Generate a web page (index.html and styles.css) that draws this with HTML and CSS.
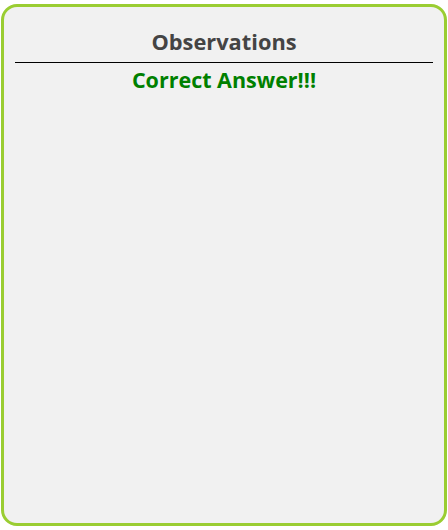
FILE: index.html
```html
<!DOCTYPE html>
<html>
<head>
<meta charset="utf-8">
<link rel="stylesheet" href="styles.css">
</head>
<body>
<div class="panel">
  <h2 class="title">Observations</h2>
  <div class="result">Correct Answer!!!</div>
</div>
</body>
</html>
```
FILE: styles.css
```css
html, body {
  margin: 0;
  padding: 0;
  background: #ffffff;
}
body {
  padding: 4px 1px;
  font-family: "Open Sans", "Noto Sans", sans-serif;
}
.panel {
  box-sizing: border-box;
  height: 522px;
  border: 3px solid #9acd32;
  border-radius: 16px;
  background: #f1f1f1;
  padding: 20px 11px 0;
}
.title {
  margin: 0;
  padding-bottom: 5px;
  border-bottom: 1px solid #000;
  text-align: center;
  font-size: 21.8px;
  line-height: 30px;
  font-weight: 700;
  color: #444444;
}
.result {
  text-align: center;
  font-size: 21.5px;
  line-height: 34px;
  font-weight: 700;
  color: #008000;
}
```
